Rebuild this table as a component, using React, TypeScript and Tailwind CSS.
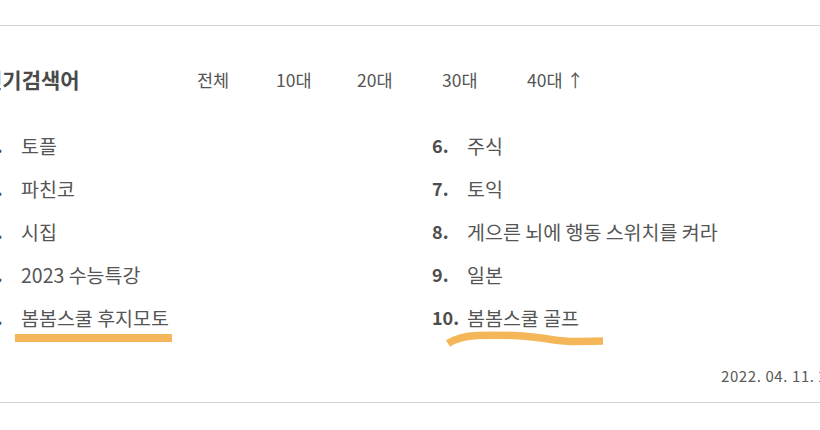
const tabs = ['전체', '10대', '20대', '30대', '40대 ↑'];

const left = ['토플', '파친코', '시집', '2023 수능특강', '봄봄스쿨 후지모토'];
const right = ['주식', '토익', '게으른 뇌에 행동 스위치를 켜라', '일본', '봄봄스쿨 골프'];

function Row({ rank, label }: { rank: number; label: string }) {
  return (
    <li className="flex h-[43px] items-center text-[19.5px] leading-[43px] text-[#555]">
      <span className="w-[35px] shrink-0 text-[18px] font-bold text-[#4d4d4d]">{rank}.</span>
      <span className="whitespace-nowrap">{label}</span>
    </li>
  );
}

export default function App() {
  return (
    <div
      className="relative h-[430px] w-[820px] overflow-hidden bg-white"
      style={{ fontFamily: '"Noto Sans CJK KR", "Noto Sans", sans-serif' }}
    >
      <div className="pt-[25px]">
        <div className="h-px w-full bg-[#d4d4d4]" />

        {/* header: title + age tabs */}
        <div className="ml-[-17px] mt-[40px] flex h-[28px] items-center">
          <h2 className="w-[214px] shrink-0 whitespace-nowrap text-[21px] font-bold text-[#4a4a4a]">인기검색어</h2>
          <ul className="flex items-center text-[17.5px] text-[#555]">
            <li className="w-[79px]">{tabs[0]}</li>
            <li className="w-[81px]">{tabs[1]}</li>
            <li className="w-[85px]">{tabs[2]}</li>
            <li className="w-[85px]">{tabs[3]}</li>
            <li className="whitespace-nowrap">{tabs[4]}</li>
          </ul>
        </div>

        {/* ranking list */}
        <div className="ml-[-14px] mt-[30px] grid grid-cols-[446px_1fr]">
          <ol>
            {left.map((t, i) => (
              <Row key={t} rank={i + 1} label={t} />
            ))}
          </ol>
          <ol>
            {right.map((t, i) => (
              <Row key={t} rank={i + 6} label={t} />
            ))}
          </ol>
        </div>

        <div className="mt-[27px] flex h-[20px] items-center whitespace-nowrap pl-[721px] text-[15px] tracking-[0.6px] text-[#5a5a5a]">
          2022. 04. 11. 20:00 기준
        </div>

        <div className="mt-[16px] h-px w-full bg-[#d4d4d4]" />
      </div>

      {/* highlighter marks */}
      <div className="absolute left-[15px] top-[334px] h-[8px] w-[157px] bg-[#f5b65a]" />
      <svg className="absolute left-[445px] top-[330px]" width="162" height="20" viewBox="0 0 162 20">
        <path
          d="M3 13.5 C 10 9, 18 6, 32 5.5 S 72 5, 92 7.5 S 118 12, 134 11.5 L 158 11"
          fill="none"
          stroke="#f5b65a"
          strokeWidth="7.5"
        />
      </svg>
    </div>
  );
}
